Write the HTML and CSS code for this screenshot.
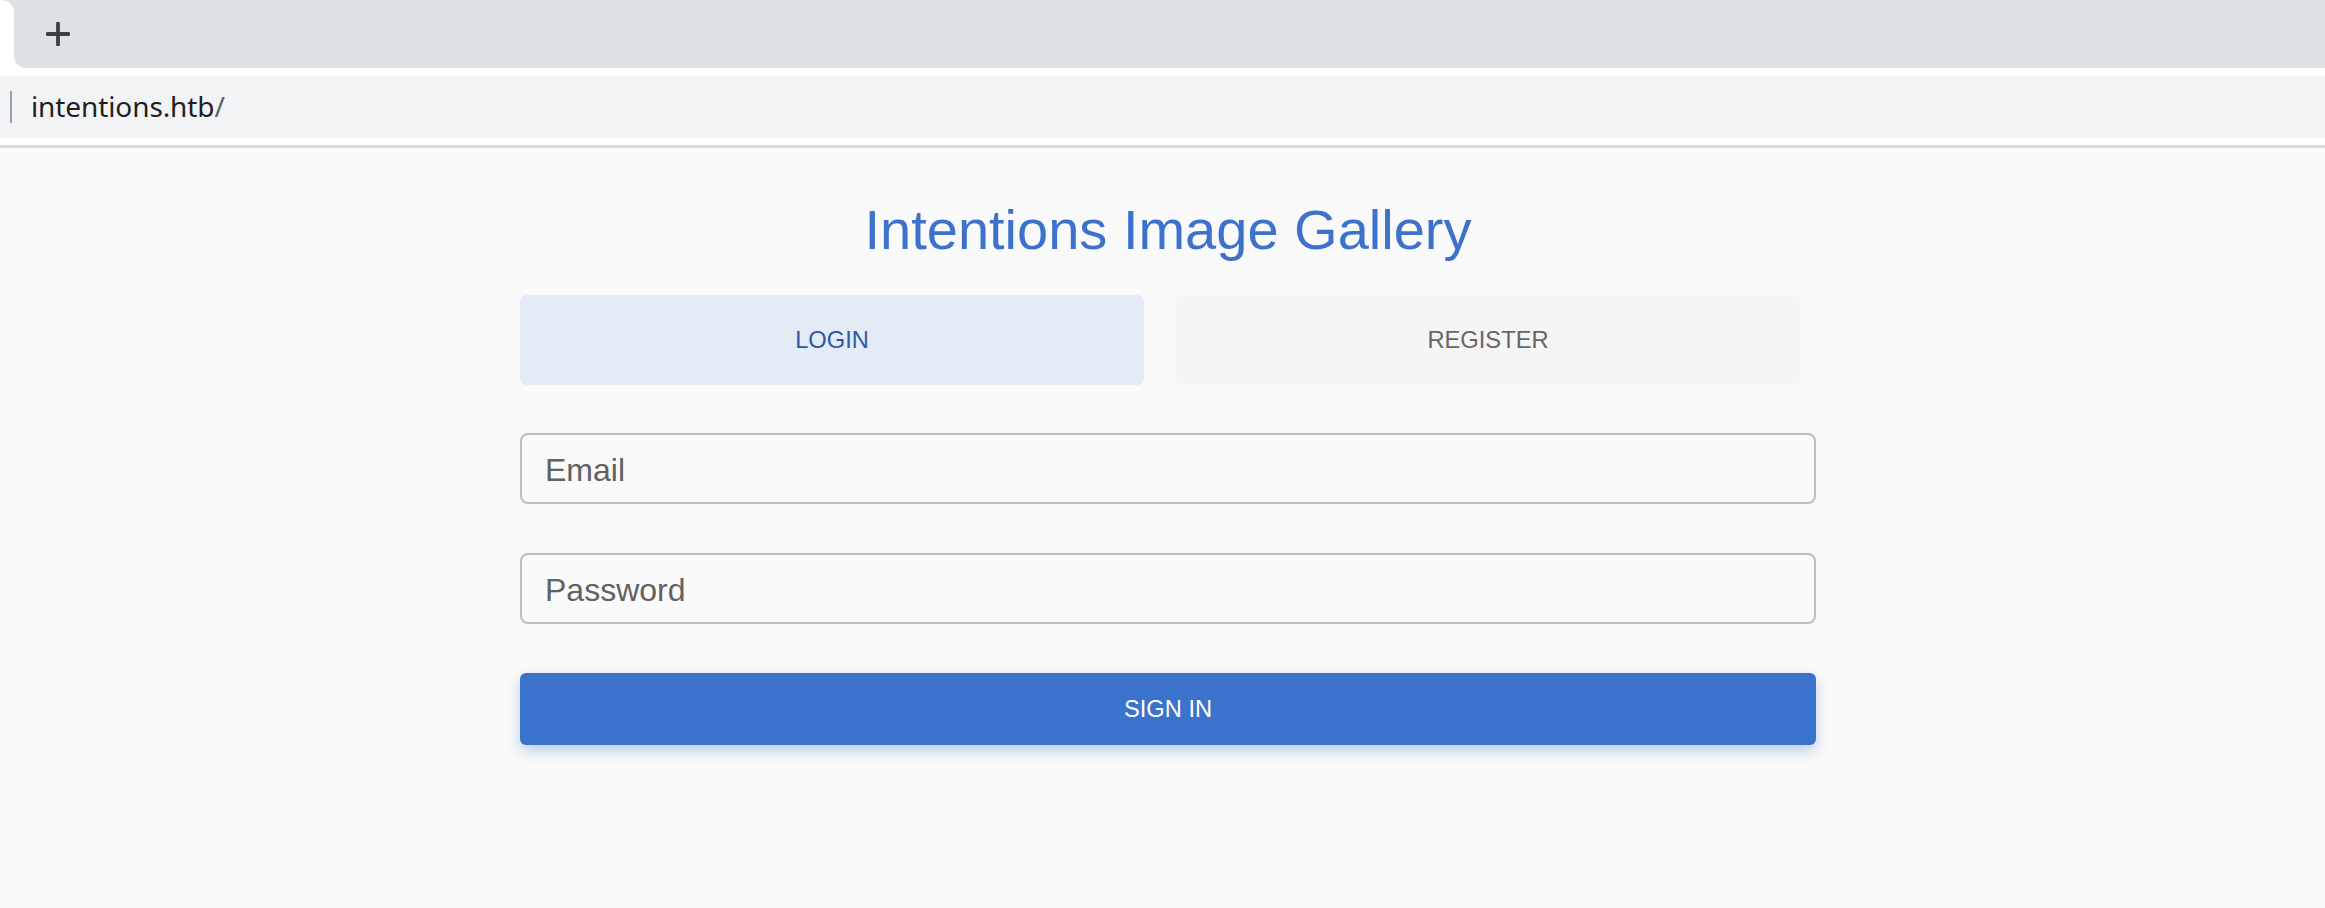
FILE: index.html
```html
<!DOCTYPE html>
<html lang="en">
<head>
<meta charset="utf-8">
<title>Intentions Image Gallery</title>
<link rel="stylesheet" href="styles.css">
</head>
<body>
<div class="chrome">
  <div class="tabstrip">
    <svg class="tab-corner" width="28" height="68" viewBox="0 0 28 68"><path d="M0 0 Q14 0 14 14 V54 Q14 68 28 68 H0 Z" fill="#ffffff"/></svg>
    <div class="newtab">
      <svg width="24" height="24" viewBox="0 0 24 24"><path d="M12 1.5 V22.5 M1.5 12 H22.5" stroke="#3c4043" stroke-width="3.8" stroke-linecap="round" fill="none"/></svg>
    </div>
  </div>
  <div class="gap-white"></div>
  <div class="addressbar">
    <span class="sep"></span>
    <span class="url">intentions.htb<span class="url-path">/</span></span>
  </div>
  <div class="gap-white small"></div>
  <div class="divider"></div>
</div>
<main class="page">
  <div class="panel">
    <h1 class="title">Intentions Image Gallery</h1>
    <div class="tabs">
      <div class="tab active">LOGIN</div>
      <div class="tab">REGISTER</div>
    </div>
    <form class="form">
      <input class="field" type="text" placeholder="Email">
      <input class="field" type="password" placeholder="Password">
      <button class="submit" type="button">SIGN IN</button>
    </form>
  </div>
</main>
</body>
</html>
```
FILE: styles.css
```css
* { box-sizing: border-box; }
html, body { margin: 0; padding: 0; }
body {
  background: #fafafa;
  font-family: "Liberation Sans", Arial, sans-serif;
  min-height: 908px;
}
.chrome { background: #ffffff; }
.tabstrip {
  height: 68px;
  background: #dee1e6;
  display: flex;
  align-items: center;
}
.tab-corner { display: block; flex: none; align-self: stretch; }
.newtab {
  margin-left: 18px;
  width: 24px;
  height: 24px;
  display: flex;
}
.newtab svg { display: block; }
.gap-white { height: 8px; background: #ffffff; }
.gap-white.small { height: 7px; }
.addressbar {
  height: 62px;
  background: #f1f3f4;
  display: flex;
  align-items: center;
}
.sep {
  width: 2px;
  height: 32px;
  background: #9aa0a6;
  margin-left: 10px;
}
.url {
  margin-left: 19px;
  font-family: "Noto Sans", "Open Sans", sans-serif;
  font-size: 28px;
  color: #1f1f1f;
  letter-spacing: -0.1px;
  position: relative;
  top: -1px;
}
.url-path { color: #5f6368; }
.divider { height: 3px; background: #dadada; }
.page {
  background: #fafafa;
  padding-left: 11px;
  padding-top: 50px;
}
.panel {
  width: 1296px;
  margin: 0 auto;
}
.title {
  margin: 0;
  text-align: center;
  font-weight: normal;
  font-size: 56px;
  line-height: 64px;
  color: #3c72cc;
}
.tabs {
  display: flex;
  gap: 32px;
  padding-right: 16px;
  margin-top: 33px;
}
.tab {
  flex: 1;
  height: 90px;
  border-radius: 7px;
  background: #f5f5f5;
  color: #666666;
  font-size: 23.7px;
  display: flex;
  align-items: center;
  justify-content: center;
}
.tab.active {
  background: #e3ebf7;
  color: #2c5aa3;
}
.form {
  margin: 48px 0 0;
  display: flex;
  flex-direction: column;
  gap: 49px;
}
.field {
  display: block;
  width: 100%;
  height: 71px;
  border: 2px solid #bdbdbd;
  border-radius: 8px;
  background: #fafafa;
  padding: 3px 0 0 23px;
  font-family: "Liberation Sans", Arial, sans-serif;
  font-size: 32px;
  color: #333333;
  outline: none;
}
.field::placeholder { color: #616161; opacity: 1; }
.submit {
  display: block;
  width: 100%;
  height: 72px;
  border: none;
  border-radius: 6px;
  background: #3b72cc;
  color: #ffffff;
  font-family: "Liberation Sans", Arial, sans-serif;
  font-size: 23.7px;
  box-shadow: 0 6px 14px rgba(59, 114, 204, 0.32);
  cursor: pointer;
}
```
